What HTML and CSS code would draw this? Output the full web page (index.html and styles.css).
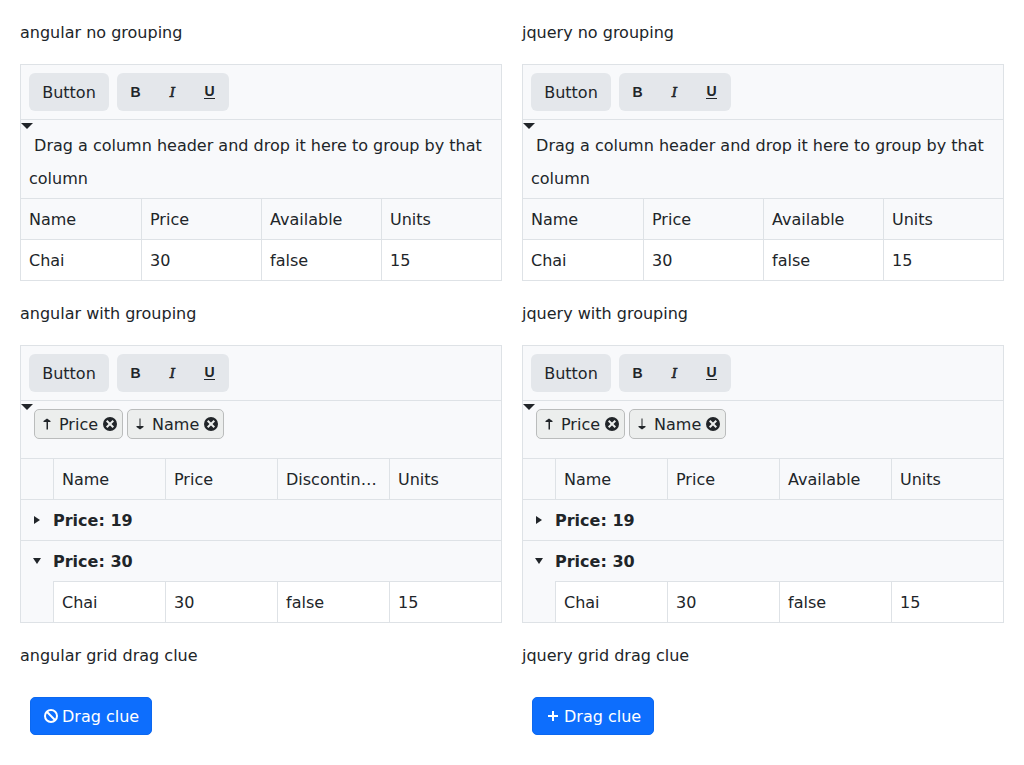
FILE: index.html
```html
<!DOCTYPE html>
<html lang="en">
<head>
<meta charset="utf-8">
<title>Grid grouping</title>
<link rel="stylesheet" href="styles.css">
</head>
<body>
<svg class="defs" aria-hidden="true">
  <symbol id="up" viewBox="0 0 16 16"><path d="M7.500 13.500V6H4.500V5L8 2.500 11.500 5v1H9v7.500z"/></symbol>
  <symbol id="down" viewBox="0 0 16 16"><path d="M7.500 2.500V10H4.500v1L8 13.500 11.500 11v-1H8.500V2.500z"/></symbol>
  <symbol id="close" viewBox="0 0 16 16"><circle cx="8" cy="8" r="7"/><path d="M4.700 4.700l6.600 6.600M11.300 4.700l-6.600 6.600" class="cross"/></symbol>
  <symbol id="cancel" viewBox="0 0 16 16"><circle cx="8" cy="8" r="6" class="ring"/><path d="M3.800 3.800l8.400 8.400" class="ring"/></symbol>
  <symbol id="plus" viewBox="0 0 16 16"><path d="M7 3h2v4h4v2H9v4H7V9H3V7h4z"/></symbol>
  <symbol id="right" viewBox="0 0 16 16"><path d="M5 4l6 4-6 4z"/></symbol>
  <symbol id="expanded" viewBox="0 0 16 16"><path d="M4 5h8l-4 6z"/></symbol>
  <symbol id="drop" viewBox="0 0 12 6"><path d="M0 0h12L6 6z"/></symbol>
</svg>
<main class="page">
  <div class="label">angular no grouping</div>
  <div class="label">jquery no grouping</div>

  <section class="grid">
    <div class="toolbar"><button class="btn">Button</button><div class="btn-group"><span class="tool bold">B</span><span class="tool italic">I</span><span class="tool underline"><span>U</span></span></div></div>
    <div class="grouping"><svg class="drop"><use href="#drop"/></svg>&nbsp;Drag a column header and drop it here to group by that column</div>
    <div class="row head"><div>Name</div><div>Price</div><div>Available</div><div>Units</div></div>
    <div class="row"><div>Chai</div><div>30</div><div>false</div><div>15</div></div>
  </section>
  <section class="grid">
    <div class="toolbar"><button class="btn">Button</button><div class="btn-group"><span class="tool bold">B</span><span class="tool italic">I</span><span class="tool underline"><span>U</span></span></div></div>
    <div class="grouping"><svg class="drop"><use href="#drop"/></svg>&nbsp;Drag a column header and drop it here to group by that column</div>
    <div class="row head"><div>Name</div><div>Price</div><div>Available</div><div>Units</div></div>
    <div class="row"><div>Chai</div><div>30</div><div>false</div><div>15</div></div>
  </section>

  <div class="label">angular with grouping</div>
  <div class="label">jquery with grouping</div>

  <section class="grid">
    <div class="toolbar"><button class="btn">Button</button><div class="btn-group"><span class="tool bold">B</span><span class="tool italic">I</span><span class="tool underline"><span>U</span></span></div></div>
    <div class="grouping chips"><svg class="drop"><use href="#drop"/></svg>
      <div class="chip"><svg class="icon"><use href="#up"/></svg><span class="chip-text">Price</span><svg class="icon"><use href="#close"/></svg></div>
      <div class="chip"><svg class="icon"><use href="#down"/></svg><span class="chip-text">Name</span><svg class="icon"><use href="#close"/></svg></div>
    </div>
    <div class="row grouped head"><div></div><div>Name</div><div>Price</div><div>Discontinued</div><div>Units</div></div>
    <div class="group-row"><svg class="icon"><use href="#right"/></svg><span>Price: 19</span></div>
    <div class="group-row"><svg class="icon"><use href="#expanded"/></svg><span>Price: 30</span></div>
    <div class="row grouped data"><div></div><div>Chai</div><div>30</div><div>false</div><div>15</div></div>
  </section>
  <section class="grid">
    <div class="toolbar"><button class="btn">Button</button><div class="btn-group"><span class="tool bold">B</span><span class="tool italic">I</span><span class="tool underline"><span>U</span></span></div></div>
    <div class="grouping chips"><svg class="drop"><use href="#drop"/></svg>
      <div class="chip"><svg class="icon"><use href="#up"/></svg><span class="chip-text">Price</span><svg class="icon"><use href="#close"/></svg></div>
      <div class="chip"><svg class="icon"><use href="#down"/></svg><span class="chip-text">Name</span><svg class="icon"><use href="#close"/></svg></div>
    </div>
    <div class="row grouped head"><div></div><div>Name</div><div>Price</div><div>Available</div><div>Units</div></div>
    <div class="group-row"><svg class="icon"><use href="#right"/></svg><span>Price: 19</span></div>
    <div class="group-row"><svg class="icon"><use href="#expanded"/></svg><span>Price: 30</span></div>
    <div class="row grouped data"><div></div><div>Chai</div><div>30</div><div>false</div><div>15</div></div>
  </section>

  <div class="label">angular grid drag clue</div>
  <div class="label">jquery grid drag clue</div>

  <div class="clue-cell"><div class="clue"><svg class="icon"><use href="#cancel"/></svg><span>Drag clue</span></div></div>
  <div class="clue-cell"><div class="clue"><svg class="icon"><use href="#plus"/></svg><span>Drag clue</span></div></div>
</main>
</body>
</html>
```

FILE: styles.css
```css
* { box-sizing: border-box; }
body {
  margin: 0;
  background: #fff;
  color: #212529;
  font: 16px/26px "DejaVu Sans", sans-serif;
}
.defs { display: none; }
.page {
  display: grid;
  grid-template-columns: 482px 482px;
  gap: 20px;
  padding: 20px;
}
.label { height: 24px; }
.grid { border: 1px solid #dee2e6; }
.icon { display: block; width: 16px; height: 16px; flex: none; fill: currentColor; }
.cross { fill: none; stroke: #eceeed; stroke-width: 2; }
.ring { fill: none; stroke: currentColor; stroke-width: 2; }

.toolbar {
  display: flex;
  gap: 8px;
  padding: 8px;
  background: #f8f9fb;
  border-bottom: 1px solid #dee2e6;
}
.btn {
  width: 80px;
  height: 38px;
  padding: 2px 0 0;
  border: 0;
  border-radius: 6px;
  background: #e4e7eb;
  color: inherit;
  font: inherit;
}
.btn-group {
  display: flex;
  width: 112px;
  height: 38px;
  border-radius: 6px;
  background: #e4e7eb;
}
.tool {
  display: flex;
  flex: 0 0 37px;
  align-items: center;
  justify-content: center;
}
.bold { font: bold 14px/16px "Liberation Sans", sans-serif; }
.italic {
  font: italic 13.5px/16px "DejaVu Serif", "Liberation Serif", serif;
  -webkit-text-stroke: 0.6px currentColor;
}
.underline { font: bold 14px/10px "Liberation Sans", sans-serif; }
.underline span { border-bottom: 1px solid; height: 13px; }

.grouping {
  position: relative;
  height: 79px;
  padding: 9px 8px 0;
  line-height: 33px;
  background: #f8f9fb;
  border-bottom: 1px solid #dee2e6;
}
.drop {
  position: absolute;
  left: 0;
  top: 3px;
  width: 12px;
  height: 6px;
  fill: #212529;
}
.chips { display: flex; gap: 4px; height: 58px; padding: 8px 0 0 13px; }
.chip {
  display: flex;
  align-items: center;
  height: 30px;
  padding: 0 4px;
  border: 1px solid #babcbc;
  border-radius: 5px;
  background: #eceeed;
  line-height: 24px;
}
.chip-text { margin: 0 4px; padding-top: 2px; }

.row { display: grid; grid-template-columns: repeat(4, 1fr); }
.row > div {
  height: 40px;
  padding: 8px 8px 6px;
  border-left: 1px solid #dee2e6;
  overflow: hidden;
  text-overflow: ellipsis;
  white-space: nowrap;
}
.row > div:first-child { border-left: 0; }
.head { background: #f8f9fb; border-bottom: 1px solid #dee2e6; }
.grouped { grid-template-columns: 32px repeat(4, 112px); }
.data > div { height: 41px; border-top: 1px solid #dee2e6; }
.data > div:first-child { border-top: 0; background: #f8f9fb; }
.group-row {
  display: flex;
  align-items: center;
  gap: 8px;
  height: 40px;
  padding: 0 8px;
  background: #f8f9fb;
  font-weight: bold;
}
.group-row span, .clue span { padding-top: 2px; }
.group-row + .group-row { height: 41px; border-top: 1px solid #dee2e6; }

.clue-cell { display: flex; padding: 10px; }
.clue {
  display: flex;
  align-items: center;
  gap: 3px;
  height: 38px;
  padding: 0 12px;
  border: 1px solid #0c68f0;
  border-radius: 5px;
  background: #0d6efd;
  color: #fff;
}
```
